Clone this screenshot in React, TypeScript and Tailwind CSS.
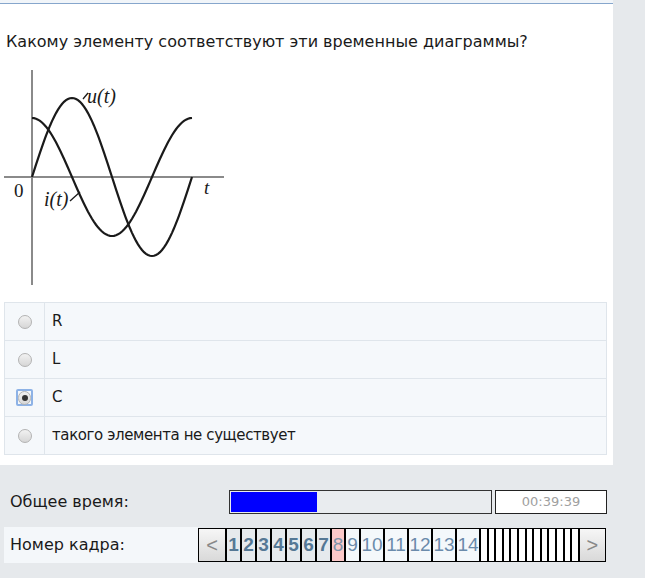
const OPTIONS = [
  { label: "R", checked: false },
  { label: "L", checked: false },
  { label: "C", checked: true },
  { label: "такого элемента не существует", checked: false },
];

const FRAMES = [1, 2, 3, 4, 5, 6, 7, 8, 9, 10, 11, 12, 13, 14];

// sine / cosine between x=32..192 on the axis y=112 (svg coords)
function wave(amp: number, cos: boolean) {
  const pts: string[] = [];
  for (let x = 32; x <= 192; x += 2) {
    const a = (2 * Math.PI * (x - 32)) / 160;
    const y = 112 - amp * (cos ? Math.cos(a) : Math.sin(a));
    pts.push(`${x},${y.toFixed(2)}`);
  }
  return "M" + pts.join(" L");
}

function Diagram() {
  return (
    <svg width="232" height="225" viewBox="0 0 232 225" className="block">
      <line x1="32" y1="5" x2="32" y2="220" stroke="#8a8a8a" strokeWidth="2" />
      <line x1="4" y1="112" x2="224" y2="112" stroke="#8a8a8a" strokeWidth="2" />
      <path d={wave(79, false)} fill="none" stroke="#1a1a1a" strokeWidth="2.2" />
      <path d={wave(59, true)} fill="none" stroke="#1a1a1a" strokeWidth="2.2" />
      <line x1="83" y1="34" x2="88" y2="28" stroke="#1a1a1a" strokeWidth="1.3" />
      <line x1="70" y1="136" x2="80" y2="127" stroke="#1a1a1a" strokeWidth="1.3" />
      <g fontFamily="'Liberation Serif', serif" fill="#1a1a1a">
        <text x="87" y="38" fontSize="20" fontStyle="italic">u(t)</text>
        <text x="44" y="141" fontSize="20" fontStyle="italic">i(t)</text>
        <text x="14" y="132" fontSize="19">0</text>
        <text x="204" y="129" fontSize="19" fontStyle="italic">t</text>
      </g>
    </svg>
  );
}

function Radio({ checked }: { checked: boolean }) {
  const dot = (
    <div className="w-[14px] h-[14px] rounded-full border border-[#b3b3b3] bg-gradient-to-b from-[#f2f2f2] to-[#d6d6d6] flex items-center justify-center">
      {checked && <div className="w-[6px] h-[6px] rounded-full bg-[#333]" />}
    </div>
  );
  if (!checked) return dot;
  return (
    <div className="w-[17px] h-[17px] rounded-[2px] border-2 border-[#8db2e6] flex items-center justify-center">
      {dot}
    </div>
  );
}

export default function App() {
  return (
    <div className="min-h-screen bg-[#e6e9ec] font-['DejaVu_Sans',sans-serif] text-[#1a1a1a]">
      <div className="w-[613px] bg-white pb-[10px]">
        <div className="h-[4px] bg-[#f1f5f9] border-b border-[#86a6cc]" />

        {/* Question */}
        <div className="mt-[28px] pl-[6px] text-[16px] leading-[20px]">
          Какому элементу соответствуют эти временные диаграммы?
        </div>

        <div className="mt-[13px]">
          <Diagram />
        </div>

        {/* Answers */}
        <div className="mt-[12px] ml-[4px] mr-[6px] border-t border-l border-r border-[#dfe5eb] bg-[#f5f8fb]">
          {OPTIONS.map((o) => (
            <div key={o.label} className="flex h-[38px] border-b border-[#dfe5eb]">
              <div className="w-[40px] border-r border-[#dfe5eb] flex items-center justify-center">
                <Radio checked={o.checked} />
              </div>
              <div className="pl-[7px] flex items-center text-[15px] tracking-[-0.4px]">{o.label}</div>
            </div>
          ))}
        </div>
      </div>

      {/* Timer */}
      <div className="mt-[23px] ml-[4px] flex items-center h-[28px]">
        <div className="w-[225px] pl-[6px] text-[16px]">Общее время:</div>
        <div className="w-[263px] h-[24px] border border-[#333] bg-[#e9ecef] p-[1px]">
          <div className="w-[86px] h-full bg-[#0000ff]" />
        </div>
        <div className="ml-[3px] w-[112px] h-[24px] border border-[#222] bg-white flex items-center justify-center text-[13px] text-[#a0a0a0]">
          00:39:39
        </div>
      </div>

      {/* Frame navigation */}
      <div className="mt-[11px] ml-[4px] flex items-center">
        <div className="w-[194px] h-[36px] bg-[#f4f7fa] pl-[6px] flex items-center text-[16px]">
          Номер кадра:
        </div>
        <div className="flex h-[34px] w-[408px] border border-black font-['Liberation_Sans',sans-serif] text-[19px]">
          <div className="w-[26px] bg-gradient-to-b from-[#f6f6f6] to-[#d9d9d9] flex items-center justify-center text-[#888] text-[20px]">
            &lt;
          </div>
          {FRAMES.map((n) => {
            const done = n < 8;
            const cur = n === 8;
            const w = n < 10 ? (n === 8 ? "w-[14px]" : "w-[15px]") : "w-[24px]";
            return (
              <div
                key={n}
                className={`${w} border-l-2 border-black flex items-center justify-center ${
                  done
                    ? "bg-[#e6eaed] font-bold text-[#557895]"
                    : cur
                    ? "bg-[#fcc9c9] text-[#7d92a8]"
                    : "bg-[#f4f8fb] text-[#6b8bab]"
                }`}
              >
                {n}
              </div>
            );
          })}
          {Array.from({ length: 13 }).map((_, i) => (
            <div key={i} className="flex-1 border-l-2 border-black bg-white" />
          ))}
          <div className="w-[27px] border-l-2 border-black bg-gradient-to-b from-[#f6f6f6] to-[#d9d9d9] flex items-center justify-center text-[#888] text-[20px]">
            &gt;
          </div>
        </div>
      </div>
    </div>
  );
}
